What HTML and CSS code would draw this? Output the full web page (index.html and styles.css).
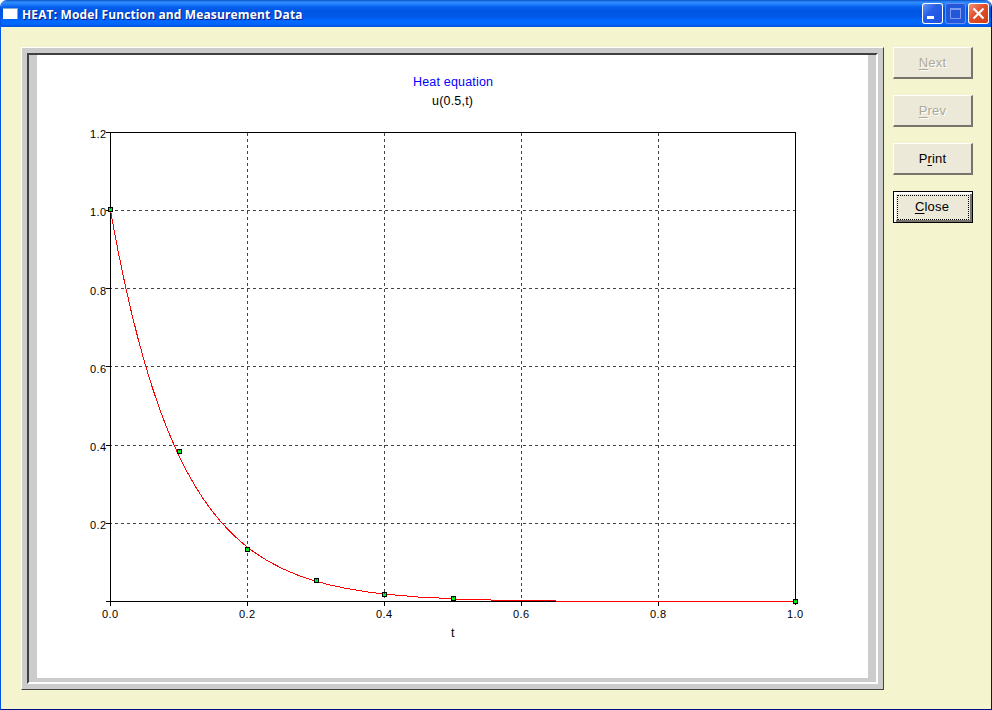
FILE: index.html
```html
<!DOCTYPE html>
<html lang="en">
<head>
<meta charset="utf-8">
<title>HEAT: Model Function and Measurement Data</title>
<link rel="stylesheet" href="styles.css">
</head>
<body>
<div class="window">
  <header class="titlebar">
    <span class="app-icon"></span>
    <h1 class="title">HEAT: Model Function and Measurement Data</h1>
    <div class="controls">
      <span class="control"><svg width="21" height="21"><rect x="5" y="13" width="7" height="3" fill="#fff"/></svg></span>
      <span class="control control-disabled"><svg width="21" height="21"><path d="M5.500 5v10.500h10V5" fill="none" stroke="#7d9cf0"/><path d="M5 6h11" stroke="#7d9cf0" stroke-width="2"/></svg></span>
      <span class="control control-close"><svg width="21" height="21"><path d="M5.500 5.500l10 10M15.500 5.500l-10 10" stroke="#fff" stroke-width="2.200"/></svg></span>
    </div>
  </header>
  <main class="content">
    <section class="frame">
      <div class="well">
        <svg class="chart" width="831" height="623" viewBox="37 55 831 623">
          <g class="labels">
            <text class="heading" x="413" y="86" textLength="80">Heat equation</text>
            <text class="subheading" x="432" y="105" textLength="41">u(0.5,t)</text>
            <text class="axis-name" x="451" y="637">t</text>
            <g class="tick">
              <text x="90" y="138" textLength="16">1.2</text>
              <text x="90" y="216" textLength="16">1.0</text>
              <text x="90" y="295" textLength="16">0.8</text>
              <text x="90" y="373" textLength="16">0.6</text>
              <text x="90" y="451" textLength="16">0.4</text>
              <text x="90" y="529" textLength="16">0.2</text>
              <text x="102" y="618" textLength="16">0.0</text>
              <text x="239" y="618" textLength="16">0.2</text>
              <text x="376" y="618" textLength="16">0.4</text>
              <text x="513" y="618" textLength="16">0.6</text>
              <text x="650" y="618" textLength="16">0.8</text>
              <text x="787" y="618" textLength="16">1.0</text>
            </g>
          </g>
          <g class="lines">
            <path class="grid" d="M109 210.500H795M109 288.500H795M109 366.500H795M109 445.500H795M109 523.500H795M247.500 133V601M384.500 133V601M521.500 133V601M658.500 133V601"/>
            <path class="axis" d="M106 132.500H795.500V605M110.500 132V606M106 601.500H556M106 210.500h4M106 288.500h4M106 366.500h4M106 445.500h4M106 523.500h4M247.500 601v5M384.500 601v5M521.500 601v5M658.500 601v5"/>
            <path class="curve" d="M110.500 210.500C121.900 274.800 133.300 323.500 144.750 362.800C156.200 402.100 167.600 431.800 179 455.800C190.400 479.800 201.800 497.900 213.250 512.500C224.700 527.200 236.100 538.300 247.500 547.200C258.900 556.100 270.300 562.900 281.750 568.300C293.200 573.800 304.600 578 316 581.300C338.800 587.900 361.700 591.500 384.500 594.100C407.300 596.500 430.200 598 453 598.700"/>
            <path class="curve" d="M453 599.500H491M491 600.500H556M556 601.500H795"/>
          </g>
          <defs><g id="marker"><rect width="5" height="5" fill="#000"/><rect x="1" y="1" width="3" height="3" fill="#00f020"/><rect x="2" y="1" width="1" height="1" fill="#063"/></g></defs>
          <g class="lines">
            <use href="#marker" x="108" y="207"/>
            <use href="#marker" x="177" y="449"/>
            <use href="#marker" x="245" y="547"/>
            <use href="#marker" x="314" y="578"/>
            <use href="#marker" x="382" y="592"/>
            <use href="#marker" x="451" y="596"/>
            <use href="#marker" x="793" y="599"/>
          </g>
        </svg>
      </div>
    </section>
    <nav class="actions">
      <button class="action" disabled><span><u>N</u>ext</span></button>
      <button class="action" disabled><span><u>P</u>rev</span></button>
      <button class="action"><span>P<u>r</u>int</span></button>
      <button class="action action-default"><span><u>C</u>lose</span></button>
    </nav>
  </main>
</div>
</body>
</html>
```

FILE: styles.css
```css
* { box-sizing: border-box; }

body {
  margin: 0;
  background: #fff;
  font-family: "Liberation Sans", Arial, sans-serif;
}

.window {
  width: 992px;
  height: 710px;
  background: #f4f4cf;
  border: 1px solid #0054e3;
  border-top: 0;
  border-right-color: #00138c;
  border-bottom-color: #00138c;
  border-radius: 7px 7px 0 0;
  overflow: hidden;
}

.titlebar {
  display: flex;
  align-items: center;
  height: 27px;
  padding: 0 2px;
  background: linear-gradient(#0b4fc4 0, #2f8cff 2px, #2482fb 4px, #0560ef 7px, #0055e2 11px, #0059ea 17px, #0068ff 21px, #0067fc 24px, #0050d8 27px);
}

.app-icon {
  width: 15px;
  height: 11px;
  background: #fff;
  border-top: 1px solid #86a8d8;
  border-right: 1px solid #86a8d8;
}

.title {
  margin: 2px 0 0 4px;
  font: bold 12px/20px "Open Sans", "Noto Sans", sans-serif;
  letter-spacing: 0.13px;
  color: #fff;
  text-shadow: 1px 1px #0a1883;
  white-space: nowrap;
}

.controls {
  display: flex;
  gap: 2px;
  margin-left: auto;
}

.control {
  width: 21px;
  height: 21px;
  border-radius: 3px;
  background: linear-gradient(135deg, #6f9cf8, #2860e8 40%, #1c4ddd);
  box-shadow: inset 0 0 0 1px #fff;
}

.control svg { display: block; }

.control-disabled {
  background: #2257dc;
  box-shadow: inset 0 0 0 1px #6a8ff0;
}

.control-close { background: linear-gradient(135deg, #f09a80, #e0502b 45%, #cb3a10); }

.content {
  display: flex;
  align-items: flex-start;
  gap: 9px;
  padding: 20px 0 0 20px;
}

.frame {
  width: 863px;
  height: 643px;
  padding: 5px;
  background: #ccc;
  border: 1px solid #fff;
  border-right-color: #444;
  border-bottom-color: #444;
}

.well {
  width: 851px;
  height: 631px;
  padding: 0 8px 4px;
  border: 2px solid #404040;
  border-right-color: #fff;
  border-bottom-color: #fff;
}

.chart {
  display: block;
  background: #fff;
}

.heading, .subheading, .axis-name { font-size: 12.5px; }
.heading { fill: #00f; }
.tick { font-size: 11px; }

.lines {
  fill: none;
  stroke-width: 1;
  shape-rendering: crispEdges;
}

.grid { stroke: #444; stroke-dasharray: 3 3; }
.axis { stroke: #000; }
.curve { stroke: #f00; }

.actions {
  display: flex;
  flex-direction: column;
  gap: 16px;
}

.action {
  width: 80px;
  height: 32px;
  padding: 0;
  border: 1px solid #fff;
  border-right: 2px solid #77756b;
  border-bottom: 2px solid #77756b;
  background: #ece9d8;
  color: #000;
  font: 13px/16px "Liberation Sans", Arial, sans-serif;
  letter-spacing: 0.2px;
}

.action:disabled {
  color: #aca899;
  text-shadow: 1px 1px #fff;
}

.action u { text-underline-offset: 2px; }

.action-default {
  padding: 3px 3px 2px;
  border: 1px solid #000;
  box-shadow: inset 2px 2px #fff, inset -2px -2px #77756b;
}

.action-default span {
  display: block;
  height: 25px;
  width: 72px;
  padding-right: 2px;
  border: 1px dotted #000;
  line-height: 21px;
}
```
